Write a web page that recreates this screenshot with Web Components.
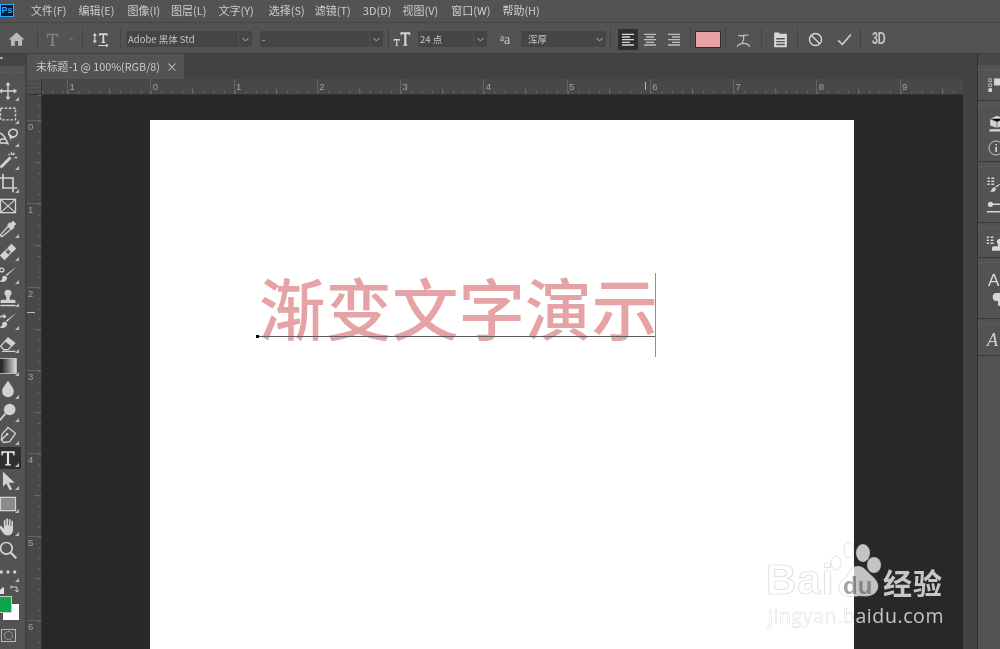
<!DOCTYPE html>
<html lang="zh"><head><meta charset="utf-8"><title>Photoshop</title>
<style>
html,body{margin:0;height:100%;background:#535353;overflow:hidden}
body{font-family:"Noto Sans CJK SC","Liberation Sans",sans-serif;color:#cfcfcf}
</style></head><body>
<ps-app>
  <ps-menubar slot="menu"></ps-menubar>
  <ps-options slot="options"></ps-options>
  <ps-toolbar slot="tools"></ps-toolbar>
  <ps-docarea slot="doc"></ps-docarea>
  <ps-panels slot="panels"></ps-panels>
</ps-app>
<ps-watermark></ps-watermark>
<script>
const S='fill="none" stroke="currentColor" stroke-width="1.6"';
const ICONS={
 home:'<path fill="currentColor" d="M12 3 2 12h3v8h5v-6h4v6h5v-8h3z"/>',
 typeT:'<path fill="currentColor" d="M4 4h16v5h-1.400c-.3-2-1-3.200-3-3.200H13.300v12.400c0 1 .7 1.300 2.200 1.400V21H8.500v-1.400c1.500-.1 2.200-.4 2.200-1.400V5.800H8.400c-2 0-2.700 1.200-3 3.200H4z"/>',
 orient:'<path fill="currentColor" d="M10 3h12v4h-1c-.2-1-.7-1.500-1.600-1.500h-2.200v9c0 .7.4.9 1.300 1V17h-5v-1.500c.9-.1 1.300-.3 1.300-1v-9h-2.200C11.700 5.500 11.200 6 11 7h-1z"/><path '+S+' d="M4 4v12M2 13.500 4 16l2-2.500M2 6.500 4 4l2 2.500M9 20.500h13M20 18.500l2 2-2 2"/>',
 tt:'<path fill="currentColor" d="M10 3h13v4h-1c-.2-1-.7-1.500-1.600-1.500h-2.600v13c0 .8.400 1 1.400 1.100V21h-5.600v-1.400c1-.1 1.400-.3 1.400-1.100v-13h-2.600C11.500 5.500 11 6 10.800 7H10z"/><path fill="currentColor" d="M1 12h8v2.500h-.8c-.1-.6-.4-1-1-1H5.800v6c0 .4.200.6.900.6V21H3.300v-.9c.7 0 .9-.2.900-.6v-6H2.800c-.6 0-.9.400-1 1H1z"/>',
 alignL:'<path fill="currentColor" d="M3 4h18v2H3zM3 8h12v2H3zM3 12h18v2H3zM3 16h12v2H3zM3 20h18v2H3z"/>',
 alignC:'<path fill="currentColor" d="M3 4h18v2H3zM6 8h12v2H6zM3 12h18v2H3zM6 16h12v2H6zM3 20h18v2H3z"/>',
 alignR:'<path fill="currentColor" d="M3 4h18v2H3zM9 8h12v2H9zM3 12h18v2H3zM9 16h12v2H9zM3 20h18v2H3z"/>',
 warp:'<path '+S+' d="M5 6c2 2 4 .5 7 0s5 1 7-1M12 6c1 4 0 8-2 11M3 22c4-6 14-6 18 0"/>',
 panel:'<path fill="currentColor" d="M3 2h7l1 2h10v19H3zM6 10v2h12v-2zm0 4v2h12v-2zm0 4v2h12v-2z"/>',
 cancel:'<circle cx="12" cy="12" r="8.500" fill="none" stroke="currentColor" stroke-width="2"/><path stroke="currentColor" stroke-width="2" d="M6 6l12 12"/>',
 check:'<path fill="none" stroke="currentColor" stroke-width="2.200" d="M3 13l6 6L21 5"/>',
 move:'<path '+S+' d="M12 3v18M3 12h18"/><path fill="currentColor" d="M12 1l3 4H9zM12 23l-3-4h6zM1 12l4-3v6zM23 12l-4 3v-6z"/>',
 marquee:'<rect x="3" y="5" width="18" height="14" fill="none" stroke="currentColor" stroke-width="1.700" stroke-dasharray="3 2"/>',
 lasso:'<path fill="none" stroke="currentColor" stroke-width="1.800" d="M2 7c3 1 5 3 7 7M7 19c-2 1-5 0-5-2s3-3 7-3l3 6-5-1zM13 9c-1-4 3-7 7-6s4 6 1 8-6 1-8-2"/><path fill="currentColor" d="M12 7l8 6-5 1 1 5z"/>',
 wand:'<path stroke="currentColor" stroke-width="3.400" d="M3 21 15 9"/><path fill="currentColor" d="M15 3h2v3h-2zM20 8h3v2h-3zM19 3l1.500 1.500-2 2L17 5zM13 4l1 3-2-1z"/>',
 crop:'<path fill="none" stroke="currentColor" stroke-width="2" d="M6 1v17h17M1 6h17v17"/>',
 frame:'<rect x="3" y="4" width="18" height="16" fill="none" stroke="currentColor" stroke-width="1.600"/><path stroke="currentColor" stroke-width="1.400" d="M3 4l18 16M21 4 3 20"/>',
 eyedrop:'<path '+S+' d="M5 21c-2 0-2-2-2-2l9-10 4 3z"/><path fill="currentColor" d="M11 7l3-3 1 1 3-3 4 4-3 3 1 1-3 3z"/>',
 heal:'<path fill="currentColor" transform="rotate(-45 12 12)" d="M2 8h20v8H2z"/><circle cx="12" cy="12" r="2" fill="#535353"/><path stroke="#535353" stroke-width="1" d="M7 8l8 8M9 6l9 9"/>',
 brushb:'<path fill="currentColor" d="M22 2 11 13l-2-1zM8 13c3 0 4 3 2 5-2 3-6 3-8 1 2 0 3-1 3-3s1-3 3-3z"/><path '+S+' d="M2 6c0-3 5-3 5 0s-5 3-5 0"/>',
 stamp:'<path fill="currentColor" d="M12 2a4 4 0 0 1 3 7c-1 1-1 2-1 5h5c1 0 2 1 2 2v2H3v-2c0-1 1-2 2-2h5c0-3 0-4-1-5a4 4 0 0 1 3-7zM3 20h18v2H3z"/>',
 history:'<path fill="currentColor" d="M22 2 11 13l-2-1zM8 13c3 0 4 3 2 5-2 3-6 3-8 1 2 0 3-1 3-3s1-3 3-3z"/><path '+S+' d="M1 9c2-3 5-4 8-2M7 4l2 3-3 1"/>',
 eraser:'<path '+S+' d="M3 16l9-10 8 6-8 8H7zM5 22h16"/><path fill="currentColor" d="M12 6l8 6-4 4-8-6z"/>',
 gradient:'<defs><linearGradient id="g"><stop offset="0" stop-color="#111"/><stop offset="1" stop-color="#ddd"/></linearGradient></defs><rect x="2" y="3" width="20" height="18" fill="url(#g)" stroke="#ccc"/>',
 drop:'<path fill="currentColor" d="M12 2c3 5 7 8 7 13a7 7 0 0 1-14 0c0-5 4-8 7-13z"/>',
 dodge:'<circle cx="14" cy="9" r="7" fill="currentColor"/><path stroke="currentColor" stroke-width="2.200" d="M9 14 2 22"/>',
 pen:'<path '+S+' d="M12 3l9 7-7 10-7 1-3-3 1-7zM4 18l6-6"/><circle cx="11" cy="11" r="1.500" fill="currentColor"/>',
 path:'<path fill="currentColor" d="M6 1l14 13h-7l4 8-3 1-4-8-4 4z"/>',
 rect:'<rect x="3" y="4" width="18" height="16" fill="#8a8a8a" stroke="#d0d0d0" stroke-width="1.500"/>',
 hand:'<path fill="currentColor" d="M7 20c-2-2-5-6-5-8s2-2 3 0l2 2V5c0-2 2-2 2 0v5h1V3c0-2 2-2 2 0v7h1V4c0-2 2-2 2 0v7h1V6c0-2 2-2 2 0v9c0 4-2 7-6 7s-4-1-5-2z"/>',
 zoom:'<circle cx="10" cy="10" r="7" fill="none" stroke="currentColor" stroke-width="2"/><path stroke="currentColor" stroke-width="2.600" d="M15 15l7 7"/>',
 dots:'<g fill="currentColor"><circle cx="4" cy="12" r="2"/><circle cx="12" cy="12" r="2"/><circle cx="20" cy="12" r="2"/></g>',
 pProps:'<path fill="none" stroke="currentColor" d="M2.500 2.500h4v4h-4zM2.500 9.500h4v4h-4z"/><path fill="currentColor" d="M2 16h5v5H2zM10 2h14v10H10z"/>',
 p3d:'<path fill="currentColor" d="M12 1l9 4v9l-9 3-9-3V5zM2 19h22v3H2z"/><path stroke="#535353" d="M3 5l9 4 9-4M12 9v8"/>',
 info:'<circle cx="12" cy="12" r="10.500" fill="none" stroke="currentColor" stroke-width="1.300"/><path fill="currentColor" d="M11 10h2.500v8H11zM11 6h2.500v2H11z"/>',
 brushes:'<path fill="currentColor" d="M2 2h3v2H2zM7 2h4v2H7zM2 6h3v2H2zM7 6h4v2H7zM2 10h3v2H2zM7 10h4v2H7zM26 6 14 15l-2-1zM11 15c3 0 3 5-1 6H5c3-1 3-6 6-6z"/>',
 sliders:'<path stroke="currentColor" stroke-width="2" d="M8 7h18M1 17h20"/><circle cx="6" cy="7" r="3.500" fill="currentColor"/><circle cx="22" cy="17" r="3" fill="currentColor"/>',
 stampl:'<path fill="currentColor" d="M1 2h3v2H1zM6 2h4v2H6zM1 6h3v2H1zM6 6h4v2H6zM1 10h3v2H1zM6 10h4v2H6zM18 5a4 4 0 0 1 3 6c-1 1-1 2-1 4h5v6H8v-4c0-1 1-2 2-2h6c0-2 0-3-1-4a4 4 0 0 1 3-6z"/>',
 para:'<path fill="currentColor" d="M24 3H10a6 6 0 0 0 0 12h2v7h3V6h2v16h3z"/>'
};
class PsIcon extends HTMLElement{connectedCallback(){
 const z=this.getAttribute('size')||20,c=this.getAttribute('color')||'#d6d6d6';
 this.attachShadow({mode:'open'}).innerHTML=`<style>:host{display:inline-flex;flex:none;color:${c};width:${z}px;height:${z}px}svg{display:block;width:100%;height:100%;overflow:visible}</style><svg viewBox="0 0 24 24">${ICONS[this.getAttribute('name')]||''}</svg>`;
}}
customElements.define('ps-icon',PsIcon);

class PsApp extends HTMLElement{constructor(){super();this.attachShadow({mode:'open'}).innerHTML=`<style>
:host{display:grid;width:1000px;height:649px;overflow:hidden;grid-template:23px 31px 1fr/27px 1fr 37px;background:#535353;filter:blur(.4px)}
::slotted([slot=menu]),::slotted([slot=options]){grid-column:1/-1}
</style><slot name="menu"></slot><slot name="options"></slot><slot name="tools"></slot><slot name="doc"></slot><slot name="panels"></slot>`}}
customElements.define('ps-app',PsApp);

class PsMenubar extends HTMLElement{constructor(){super();
 const items=[['文件(F)',12],['编辑(E)',13],['图像(I)',11],['图层(L)',12],['文字(Y)',15],['选择(S)',10],['滤镜(T)',12],['3D(D)',11],['视图(V)',13],['窗口(W)',12],['帮助(H)',0]];
 this.attachShadow({mode:'open'}).innerHTML=`<style>
:host{display:flex;align-items:center;background:#535353;border-bottom:1px solid #454545;font:11px/19px "Noto Sans CJK SC","Liberation Sans",sans-serif;color:#cdcdcd;white-space:nowrap;padding-bottom:2px;height:20px}
.ps{flex:none;width:14px;height:13px;margin:0 17px 0 0;background:#001e36;border:1px solid #31a8ff;box-sizing:border-box;color:#31a8ff;font:bold 9px/11px "Liberation Sans",sans-serif;text-align:center}
</style><span class="ps">Ps</span>${items.map(([t,g])=>`<span style="margin-right:${g}px">${t}</span>`).join('')}`}}
customElements.define('ps-menubar',PsMenubar);

class PsSelect extends HTMLElement{constructor(){super();this.attachShadow({mode:'open'}).innerHTML=`<style>
:host{display:flex;flex:none;align-items:center;height:16px;background:#454545;border-radius:2px;font:9.500px/16px "Noto Sans CJK SC","Liberation Sans",sans-serif;color:#c4c4c4;box-sizing:border-box;white-space:nowrap}
.t{flex:1;padding-left:2px;overflow:hidden}
.c{flex:none;width:13px;height:16px;display:flex;align-items:center;justify-content:center;border-left:1px solid var(--sep,#535353)}
.c svg{width:7px;height:5px}
</style><span class="t"><slot></slot></span><span class="c"><svg viewBox="0 0 7 5"><path d="M.5 1 3.500 4 6.500 1" fill="none" stroke="#b5b5b5"/></svg></span>`}}
customElements.define('ps-select',PsSelect);

class PsDiv extends HTMLElement{constructor(){super();this.attachShadow({mode:'open'}).innerHTML=`<style>:host{display:block;flex:none;width:1px;height:22px;background:#454545}</style>`}}
customElements.define('ps-div',PsDiv);

class PsOptions extends HTMLElement{constructor(){super();this.attachShadow({mode:'open'}).innerHTML=`<style>
:host{display:flex;align-items:center;height:31px;background:#535353;box-sizing:border-box;border-bottom:1px solid #3e3e3e;white-space:nowrap;padding-top:2px}
.aa{flex:none;font:14px/16px "Liberation Serif",serif;color:#c8c8c8;width:16px;text-align:center}
.aa small{font-size:10px;vertical-align:3px}
.active{flex:none;display:flex;align-items:center;justify-content:center;width:20px;height:21px;background:#2f2f2f}
.swatch{flex:none;width:24px;height:15px;background:#e8a1a5;border:1px solid #2e2e2e}
.tri{flex:none;width:0;height:0;border:3px solid transparent;border-top-color:#696969;margin-top:3px}
.d3{flex:none;font:bold 16px/16px "Liberation Sans",sans-serif;color:#c6c6c6;letter-spacing:-.5px;transform:scaleX(.68);transform-origin:0 50%;display:inline-block}
</style>
<ps-icon name="home" size="19" color="#b9b9b9" style="margin:0 11px 0 7px"></ps-icon>
<ps-div style="margin-right:6px"></ps-div>
<ps-icon name="typeT" size="17" color="#838383" style="margin-right:7px"></ps-icon>
<span class="tri" style="margin-right:8px"></span>
<ps-div style="margin-right:9px"></ps-div>
<ps-icon name="orient" size="17" style="margin-right:11px"></ps-icon>
<ps-div style="margin-right:5px"></ps-div>
<ps-select style="width:126px;margin-right:8px">Adobe 黑体 Std</ps-select>
<ps-select style="width:123px;margin-right:5px">-</ps-select>
<ps-div style="margin-right:4px"></ps-div>
<ps-icon name="tt" size="18" style="margin-right:7px"></ps-icon>
<ps-select style="width:69px;margin-right:10px">24 点</ps-select>
<span class="aa" style="margin-right:8px"><small>a</small>a</span>
<ps-select style="width:85px;--sep:#454545;margin-right:4px"><span style="padding-left:5px">浑厚</span></ps-select>
<ps-div style="margin-right:7px"></ps-div>
<span class="active"><ps-icon name="alignL" size="16"></ps-icon></span>
<ps-icon name="alignC" size="16" color="#bdbdbd" style="margin:0 8px 0 4px"></ps-icon>
<ps-icon name="alignR" size="16" color="#bdbdbd" style="margin-right:8px"></ps-icon>
<ps-div style="margin-right:4px"></ps-div>
<span class="swatch" style="margin-right:4px"></span>
<ps-div style="margin-right:9px"></ps-div>
<ps-icon name="warp" size="17" color="#c4c4c4" style="margin-right:9px"></ps-icon>
<ps-div style="margin-right:10px"></ps-div>
<ps-icon name="panel" size="17" style="margin-right:8px"></ps-icon>
<ps-div style="margin-right:9px"></ps-div>
<ps-icon name="cancel" size="17" style="margin-right:12px"></ps-icon>
<ps-icon name="check" size="17" style="margin-right:7px"></ps-icon>
<ps-div style="margin-right:11px"></ps-div>
<span class="d3">3D</span>`}}
customElements.define('ps-options',PsOptions);

class PsTool extends HTMLElement{constructor(){super();this.attachShadow({mode:'open'}).innerHTML=`<style>
:host{display:flex;position:relative;width:21px;height:22.920px;align-items:center;overflow:hidden}
:host([active]){background:#2f2f2f}
.i{display:flex;margin-left:-2px}
.tri{position:absolute;left:15px;bottom:2px;width:0;height:0;border-style:solid;border-width:0 0 4px 4px;border-color:transparent transparent #bdbdbd transparent}
:host([plain]) .tri{display:none}
</style><span class="i"><slot></slot></span><span class="tri"></span>`}}
customElements.define('ps-tool',PsTool);

class PsToolbar extends HTMLElement{constructor(){super();
 const t=['move','marquee','lasso','wand','crop','frame','eyedrop','heal','brushb','stamp','history','eraser','gradient','drop','dodge','pen','typeT','path','rect','hand','zoom','dots'];
 const small={frame:1,zoom:1};
 this.attachShadow({mode:'open'}).innerHTML=`<style>
:host{display:flex;flex-direction:column;background:#535353;border-right:2px solid #424242;box-sizing:border-box;width:27px;height:595px;overflow:hidden}
.top{flex:none;height:12px;background:#454545;color:#ddd;font:8px/8px "Liberation Sans",sans-serif}
.grip{flex:none;height:14px;background:radial-gradient(circle,#6b6b6b .7px,transparent 1px) 0 5px/3px 3px repeat-x}
.bot{position:relative;flex:1}
.x{position:absolute}
</style>
<div class="top">•</div><div class="grip"></div>
${t.map(n=>`<ps-tool ${n==='typeT'?'active':''} ${small[n]?'plain':''}><ps-icon name="${n}" size="20" color="${n==='typeT'?'#e4e4e4':'#d2d2d2'}"></ps-icon></ps-tool>`).join('')}
<div class="bot">
  <svg class="x" style="left:0;top:2px" width="8" height="9" viewBox="0 0 8 9"><path fill="#e0e0e0" d="M0 4l3-3 1 1v6H0z"/></svg>
  <svg class="x" style="left:10px;top:1px" width="10" height="10" viewBox="0 0 10 10"><path fill="none" stroke="#d0d0d0" d="M1 2h6v5M5 5l2 2 2-2M1 .5v3"/></svg>
  <span class="x" style="left:3px;top:20px;width:16px;height:16px;background:#fff"></span>
  <span class="x" style="left:-2px;top:12px;width:12px;height:15px;background:#0aa64b;border:1px solid #c9c9c9"></span>
  <svg class="x" style="left:1px;top:45px" width="15" height="13" viewBox="0 0 15 13"><rect x=".5" y=".5" width="14" height="12" fill="none" stroke="#b8b8b8"/><circle cx="7.500" cy="6.500" r="4" fill="none" stroke="#b8b8b8" stroke-dasharray="2 1"/></svg>
</div>`}}
customElements.define('ps-toolbar',PsToolbar);

class PsRuler extends HTMLElement{constructor(){super();
 const v=this.hasAttribute('vertical');
 const labels=v?['0','1','2','3','4','5','6']:['1','0','1','2','3','4','5','6','7','8','9'];
 this.attachShadow({mode:'open'}).innerHTML=`<style>
:host{display:flex;flex-direction:${v?'column':'row'};background:#484848;overflow:hidden;flex:none;color:#a2a2a2;font:9.500px/12px "Liberation Sans",sans-serif;${v?'width:15px;border-right:1px solid #333;box-sizing:border-box':'height:16px;border-bottom:1px solid #333;box-sizing:border-box;position:relative'}}
.c{flex:none;box-sizing:border-box;${v?
 'height:83.250px;border-top:1px solid #636363;padding:0 0 0 1px;background:linear-gradient(#656565 1px,transparent 1px) 100% 0/3px 10.410px repeat-y,linear-gradient(#656565 1px,transparent 1px) 100% 41px/7px 83.250px no-repeat':
 'width:83.250px;border-left:1px solid #636363;padding:2px 0 0 1.500px;background:linear-gradient(90deg,#656565 1px,transparent 1px) 0 100%/10.410px 3px repeat-x,linear-gradient(90deg,#656565 1px,transparent 1px) 41px 100%/83.250px 6px no-repeat'}}
.lead{${v?'height:25px':'width:25px'};border:0}
</style><div class="c lead"></div>${labels.map(l=>`<div class="c">${l}</div>`).join('')}`}}
customElements.define('ps-ruler',PsRuler);

class PsDocarea extends HTMLElement{constructor(){super();this.attachShadow({mode:'open'}).innerHTML=`<style>
:host{display:grid;grid-template:25px 16px 1fr/15px 1fr;min-width:0;min-height:0;overflow:hidden;background:#282828;position:relative}
.tabs{grid-column:1/-1;background:#424242;display:flex}
.tab{display:flex;align-items:center;width:157px;box-sizing:border-box;padding-left:9px;background:#535353;font:10.800px/25px "Noto Sans CJK SC","Liberation Sans",sans-serif;color:#c8c8c8;white-space:nowrap}
.tab b{font-weight:normal;margin-left:6px;color:#c0c0c0;font-size:12px}
.corner{background:#4c4c4c linear-gradient(#555 1px,transparent 1px) 0 0/100% 4px;border-right:1px solid #333;border-bottom:1px solid #333;box-sizing:border-box}
.canvas{background:#282828;min-height:0;overflow:hidden;padding:25px 0 0 108px;box-sizing:border-box}
.mark{position:absolute;background:#bdbdbd}
</style>
<div class="tabs"><div class="tab">未标题-1 @ 100%(RGB/8)<b>×</b></div></div>
<div class="corner"></div><ps-ruler></ps-ruler>
<ps-ruler vertical></ps-ruler>
<div class="canvas"><ps-document></ps-document></div>
<span class="mark" style="left:618px;top:28px;width:1px;height:8px"></span>
<span class="mark" style="left:0;top:258px;width:8px;height:1px"></span>`}}
customElements.define('ps-docarea',PsDocarea);

class PsDocument extends HTMLElement{constructor(){super();this.attachShadow({mode:'open'}).innerHTML=`<style>
:host{display:block;width:704px;height:600px;background:#fff;padding:148px 0 0 109px;box-sizing:border-box}
.line{position:relative;display:inline-block;font:500 66.500px/76px "Noto Sans CJK SC",sans-serif;color:#e6a3a6;white-space:nowrap}
.base{position:absolute;left:-2px;right:2px;top:68px;height:1px;background:#5c5c5c}
.dot{position:absolute;left:-3px;top:67px;width:3px;height:3px;background:#000}
.caret{position:absolute;right:2px;top:5px;width:1px;height:84px;background:#8f8f8f}
</style><div class="line">渐变文字演示<span class="base"></span><span class="dot"></span><span class="caret"></span></div>`}}
customElements.define('ps-document',PsDocument);

class PsPanels extends HTMLElement{constructor(){super();
 this.attachShadow({mode:'open'}).innerHTML=`<style>
:host{display:flex;background:#424242;overflow:hidden}
.strip{flex:none;width:14px;border-right:1px solid #333}
.col{flex:none;width:22px;display:flex;flex-direction:column;overflow:hidden}
.head{flex:none;height:11px;background:#484848}
.g{flex:none;background:#535353;border-bottom:1px solid #3a3a3a;display:flex;flex-direction:column;overflow:hidden;box-sizing:border-box}
.grip{flex:none;height:9px;margin-bottom:3px;background:radial-gradient(circle,#6b6b6b .7px,transparent 1px) 2px 3px/3px 3px repeat-x}
.fill{flex:1;background:#535353}
ps-icon{margin-bottom:3px}
.tx{font:17px/18px "Liberation Sans",sans-serif;color:#dcdcdc;padding-left:10px;height:18px;margin-top:2px}
.it{font:italic 18px/18px "Liberation Serif",serif;color:#d0d0d0;padding-left:9px}
</style><div class="strip"></div><div class="col"><div class="head"></div>
<div class="g" style="height:36px"><div class="grip"></div><ps-icon name="pProps" size="17" style="margin-left:9px"></ps-icon></div>
<div class="g" style="height:61px"><div class="grip"></div><ps-icon name="p3d" size="18" style="margin:2px 0 7px 10px"></ps-icon><ps-icon name="info" size="16" style="margin-left:10px"></ps-icon></div>
<div class="g" style="height:61px"><div class="grip"></div><ps-icon name="brushes" size="18" style="margin:2px 0 5px 8px"></ps-icon><ps-icon name="sliders" size="18" style="margin-left:8px"></ps-icon></div>
<div class="g" style="height:35px"><div class="grip"></div><ps-icon name="stampl" size="18" style="margin-left:8px"></ps-icon></div>
<div class="g" style="height:61px"><div class="grip"></div><div class="tx">A</div><ps-icon name="para" size="16" style="margin:1px 0 0 12px"></ps-icon></div>
<div class="g" style="height:37px"><div class="grip"></div><div class="it">A</div></div>
<div class="fill"></div></div>`}}
customElements.define('ps-panels',PsPanels);

class PsWatermark extends HTMLElement{constructor(){super();this.attachShadow({mode:'open'}).innerHTML=`<style>
:host{position:fixed;left:766px;top:540px;width:190px;height:90px;display:block;color:rgba(255,255,255,.74);font-family:"Liberation Sans",sans-serif;--st:rgba(120,120,120,.3)}
.row{display:flex;align-items:flex-start;height:63px}
.bai{flex:none;width:66px;font:bold 42px/46px "Liberation Sans",sans-serif;margin-top:17px;letter-spacing:1px;-webkit-text-stroke:.7px var(--st);color:rgba(255,255,255,.6)}
.paw{flex:none;width:48px;height:62px;overflow:visible}
.jy{flex:none;font:bold 29px/34px "Noto Sans CJK SC",sans-serif;margin:25px 0 0 3px;letter-spacing:1px;white-space:nowrap}
.url{font:19.500px/24px "Open Sans","Liberation Sans",sans-serif;white-space:nowrap;margin:1px 0 0 2px;letter-spacing:.6px;-webkit-text-stroke:.4px var(--st)}
.du{font:bold 24px "Liberation Sans",sans-serif;fill:rgba(70,70,70,.5)}
</style><div class="row"><span class="bai">Bai</span>
<svg class="paw" viewBox="0 0 48 62"><g fill="rgba(255,255,255,.72)" stroke="rgba(120,120,120,.3)" stroke-width=".7"><ellipse cx="4" cy="23" rx="5" ry="7"/><ellipse cx="17" cy="10" rx="5" ry="8"/><ellipse cx="31" cy="13" rx="7" ry="9"/><ellipse cx="42" cy="25" rx="7" ry="8"/><path d="M26 26c5 0 8 4 13 9 6 5 8 9 7 13-2 8-10 9-18 8-7 1-19 2-21-6-2-7 5-10 8-14 3-5 5-10 11-10z"/></g><text class="du" x="11" y="54">du</text></svg>
<span class="jy">经验</span></div><div class="url">jingyan.baidu.com</div>`}}
customElements.define('ps-watermark',PsWatermark);
</script>
</body></html>
